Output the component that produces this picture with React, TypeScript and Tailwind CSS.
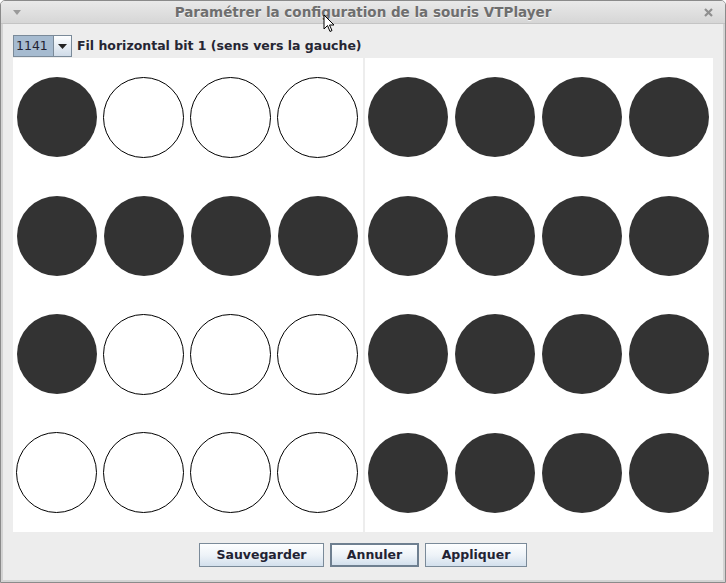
import React from "react";

const pattern: boolean[][] = [
  [true, false, false, false, true, true, true, true],
  [true, true, true, true, true, true, true, true],
  [true, false, false, false, true, true, true, true],
  [false, false, false, false, true, true, true, true],
];

function Panel({ side }: { side: number }) {
  return (
    <div className="grid grid-cols-[repeat(4,87px)] grid-rows-[repeat(4,1fr)] bg-white h-full">
      {pattern.map((row, r) =>
        row.slice(side * 4, side * 4 + 4).map((on, c) => (
          <div
            key={`${r}-${c}`}
            className={side === 0 ? "flex items-center justify-center" : "flex items-center justify-start pl-[3px]"}
          >
            {on ? (
              <div className="w-[80px] h-[80px] rounded-full bg-[#333333]" />
            ) : (
              <div className="w-[81px] h-[81px] rounded-full bg-white border border-black" />
            )}
          </div>
        ))
      )}
    </div>
  );
}

function Button({ label, w, focused }: { label: string; w: string; focused?: boolean }) {
  return (
    <div
      className={
        "h-[24px] flex items-center justify-center font-bold text-[12.5px] text-[#222233] bg-gradient-to-b from-[#fdfeff] via-[#eef3f8] to-[#d3e0ed] " +
        w +
        (focused ? " border-2 border-[#6e7f90]" : " border border-[#7a8a99]")
      }
    >
      {label}
    </div>
  );
}

export default function App() {
  return (
    <div className="w-[726px] h-[583px] relative flex flex-col border border-[#8a8a8a] rounded-t-[5px] bg-[#ededed] overflow-hidden font-['DejaVu_Sans',sans-serif]">
      <div className="h-[23px] flex items-center bg-gradient-to-b from-[#e9e9e9] to-[#d6d6d6] border-b border-[#c4c4c4]">
        <div className="w-[40px] flex justify-start pl-[12px]">
          <svg width="8" height="5" viewBox="0 0 8 5">
            <path d="M0 0 L8 0 L4 5 Z" fill="#9a9a9a" />
          </svg>
        </div>
        <div className="flex-1 text-center text-[13.5px] font-bold text-[#6e6e6e] [text-shadow:0_1px_0_#f4f4f4] leading-none pt-[1px]">
          Paramétrer la configuration de la souris VTPlayer
        </div>
        <div className="w-[40px] flex justify-end pr-[12px]">
          <svg width="9" height="9" viewBox="0 0 9 9">
            <path d="M1 1 L8 8 M8 1 L1 8" stroke="#8f8f8f" strokeWidth="2.2" />
          </svg>
        </div>
      </div>
      <div className="flex-1 flex flex-col border-x-2 border-b-2 border-[#d3d3d3] pt-[11px] px-[10px]">
        <div className="flex items-center h-[22px]">
          <div className="flex h-[22px] w-[59px] border border-[#7a8a99]">
            <div className="w-[39px] bg-[#a6bbd0] text-[12.5px] text-[#222233] flex items-center pl-[2px] pt-[1px]">1141</div>
            <div className="flex-1 border-l border-[#7a8a99] bg-gradient-to-b from-[#fdfeff] to-[#cfdbe8] flex items-center justify-center">
              <svg width="9" height="5" viewBox="0 0 9 5">
                <path d="M0 0 L9 0 L4.5 5 Z" fill="#222222" />
              </svg>
            </div>
          </div>
          <div className="ml-[5px] font-bold text-[12.5px] text-[#262633] pt-[1px]">Fil horizontal bit 1 (sens vers la gauche)</div>
        </div>
        <div className="mt-[1px] h-[474px] w-[700px] flex gap-[2px]">
          <div className="w-[350px]">
            <Panel side={0} />
          </div>
          <div className="w-[348px]">
            <Panel side={1} />
          </div>
        </div>
        <div className="mt-[11px] flex justify-center gap-[6px]">
          <Button label="Sauvegarder" w="w-[125px]" />
          <Button label="Annuler" w="w-[89px]" focused />
          <Button label="Appliquer" w="w-[102px]" />
        </div>
      </div>
      <svg className="absolute left-[322px] top-[13px]" width="13" height="20" viewBox="0 0 13 20">
        <path d="M1 1 L1 15 L4.5 11.5 L7 17.5 L9 16.5 L6.5 11 L11 11 Z" fill="#ffffff" stroke="#000000" strokeWidth="1" strokeLinejoin="round" />
      </svg>
    </div>
  );
}
